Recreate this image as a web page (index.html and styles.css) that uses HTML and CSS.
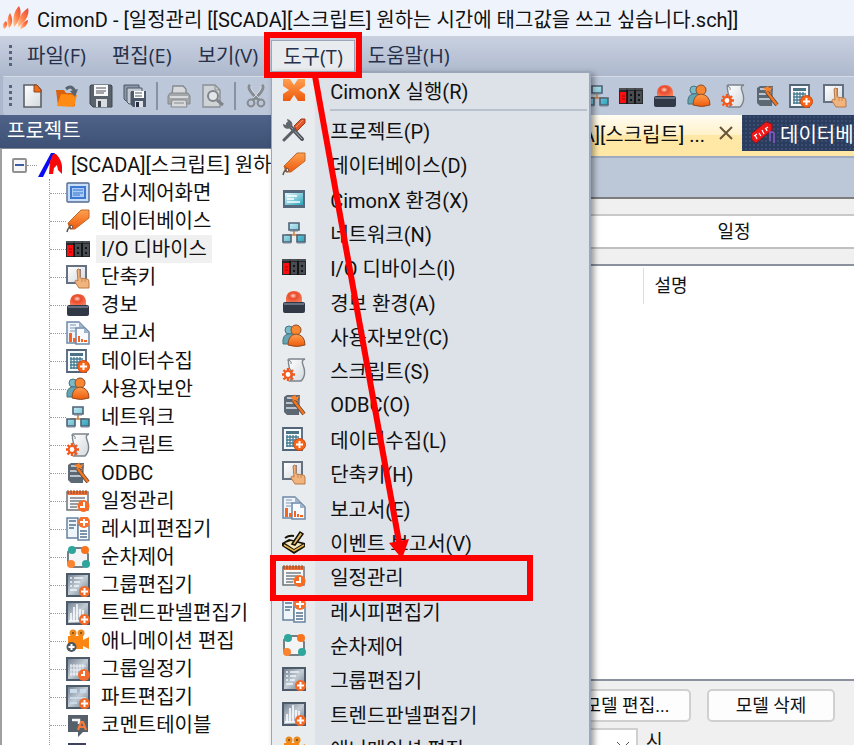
FILE: index.html
```html
<!DOCTYPE html>
<html lang="ko">
<head>
    <meta charset="UTF-8">
    <meta name="viewport" content="width=device-width, initial-scale=1.0">
    <title>CimonD</title>
    <link rel="stylesheet" href="styles.css">
</head>
<body>

<!-- Icon set -->
<svg class="sprite" aria-hidden="true">
    <defs>
        <linearGradient id="orange" x1="0" y1="0" x2="0" y2="1"><stop offset="0" stop-color="#ffa050"/><stop offset="1" stop-color="#ee5a0c"/></linearGradient>
        <linearGradient id="steel" x1="0" y1="0" x2="1" y2="1"><stop offset="0" stop-color="#6d7c8c"/><stop offset="0.5" stop-color="#c3ccd5"/><stop offset="1" stop-color="#657485"/></linearGradient>
        <linearGradient id="paper" x1="0" y1="0" x2="1" y2="1"><stop offset="0" stop-color="#ffffff"/><stop offset="1" stop-color="#d3d9de"/></linearGradient>
        <linearGradient id="glass" x1="0" y1="0" x2="1" y2="1"><stop offset="0" stop-color="#e2f8ff"/><stop offset="1" stop-color="#28a3b8"/></linearGradient>
        <linearGradient id="flame" x1="0" y1="1" x2="1" y2="0"><stop offset="0" stop-color="#ffd0a0"/><stop offset="0.5" stop-color="#ff7d45"/><stop offset="1" stop-color="#e8443c"/></linearGradient>
        <radialGradient id="lamp" cx="0.45" cy="0.4" r="0.6"><stop offset="0" stop-color="#ffd6c8"/><stop offset="0.4" stop-color="#ea4a2a"/><stop offset="1" stop-color="#f47a58"/></radialGradient>
    </defs>
    <symbol id="i-logo" viewBox="0 0 26 26">
        <g fill="url(#flame)"><path d="M1 24c-2-3-1-6 2-8 2 3 1 6-2 8z"/><path d="M6 23c-3-6-1-12 1-15 3 6 3 11-1 15z"/><path d="M11 22c-2-8 0-16 5-21 4 7 0 16-5 21z"/><path d="M15 22c-1-8 4-15 10-19 2 6-3 15-10 19z"/><path d="M17 24c1-4 4-8 8-9 0 4-3 8-8 9z"/></g>
    </symbol>
    <symbol id="i-new" viewBox="0 0 24 24">
        <path d="M3 1h12l5 5v17H3z" fill="url(#paper)" stroke="#5d6165" stroke-width="1.6"/><path d="M13 1h3l4 5v2h-7z" fill="#f26a1b" stroke="#8a4a20"/>
    </symbol>
    <symbol id="i-open" viewBox="0 0 24 24">
        <path d="M1 6h8l2 3h9v13H3z" fill="#d8600f"/><path d="M2 22l4-12 16 1-3 12z" fill="#ff8a14"/><path d="M11 5q6-5 9 3" fill="none" stroke="#596470" stroke-width="3"/><path d="M15 7l8-2-3 8z" fill="#596470"/>
    </symbol>
    <symbol id="i-save" viewBox="0 0 24 24">
        <path d="M2 1h20l1 1v21H4l-3-3V2z" fill="#59616b" stroke="#3f464e"/><path d="M5 1h14v11H5z" fill="#f8f8f8"/><path d="M7 4h10M7 7h10M7 9h8" stroke="#4b5158"/><path d="M7 15h11v8H7z" fill="#d9dde1"/><path d="M9 17h3v6H9z" fill="#3f464e"/>
    </symbol>
    <symbol id="i-saveall" viewBox="0 0 24 24">
        <path d="M1 1h15v4H5v12H3l-2-2z" fill="#8b96a6" stroke="#4c5869"/><path d="M4 4h15v4H8v12H6l-2-2z" fill="#c3cad4" stroke="#4c5869"/><path d="M8 7h15v16H10l-2-2z" fill="#4c5869"/><path d="M11 7h10v7H11z" fill="#fff"/><path d="M12 9h7M12 12h7" stroke="#4c5869"/><path d="M12 17h8v6h-8z" fill="#dde2e8"/><path d="M13 18h3v5h-3z" fill="#26303e"/>
    </symbol>
    <symbol id="i-print" viewBox="0 0 24 24">
        <path d="M5 10l1-8h10l3 3v5" fill="#d8d9da" stroke="#868a8e" stroke-width="1.4"/><path d="M3 9h18l2 3v8H1v-8z" fill="#a4a7aa" stroke="#85898d"/><path d="M3 13h18" stroke="#d9dadb" stroke-width="2"/><path d="M5 16h14l1 7H4z" fill="#d8d9da" stroke="#868a8e"/><path d="M7 19h10" stroke="#868a8e"/>
    </symbol>
    <symbol id="i-preview" viewBox="0 0 24 24">
        <path d="M2 1h12l5 5v17H2z" fill="#cfd3d6" stroke="#8b9095" stroke-width="1.4"/><path d="M14 1v5h5" fill="none" stroke="#8b9095"/><circle cx="12" cy="12" r="5" fill="#e3e6e8" stroke="#7f858a" stroke-width="2"/><path d="M16 16l6 5" stroke="#7f858a" stroke-width="3"/>
    </symbol>
    <symbol id="i-cut" viewBox="0 0 24 24">
        <path d="M5 1q-4 4 9 15M17 1q4 4-9 15" fill="none" stroke="#858b91" stroke-width="3"/><path d="M6 2q-1 4 8 12M16 2q1 4-8 12" fill="none" stroke="#d5d9dc"/><circle cx="6" cy="19" r="3.4" fill="none" stroke="#858b91" stroke-width="2"/><circle cx="16" cy="19" r="3.4" fill="none" stroke="#858b91" stroke-width="2"/>
    </symbol>
    <symbol id="i-run" viewBox="0 0 24 24">
        <path d="M1 1h7l4 6 4-6h7v7l-6 4 6 4v7h-7l-4-6-4 6H1v-7l6-4-6-4z" fill="url(#orange)"/>
    </symbol>
    <symbol id="i-tools" viewBox="0 0 24 24">
        <path d="M6 6l14 15" stroke="#51565c" stroke-width="4" stroke-linecap="round"/><path d="M7 7l13 14" stroke="#a5abb1" stroke-width="1"/><path d="M5 1l1 4-2 2-3-1c0 4 4 6 8 4 3-3 1-8-4-9z" fill="#60666c"/><path d="M2 22l11-11" stroke="#5a6066" stroke-width="3" stroke-linecap="round"/><path d="M12 8l7-7h4v4l-8 8z" fill="#e2572c" stroke="#9c3b1e"/><path d="M14 9l7-7" stroke="#ff9c70"/>
    </symbol>
    <symbol id="i-tag" viewBox="0 0 24 24">
        <path d="M2 14L15 1h8v8L9 20H4z" fill="url(#orange)" stroke="#c06a2c"/><path d="M3 14l3 6" stroke="#a85622"/><circle cx="5" cy="18" r="1.8" fill="#eee" stroke="#714f45"/><path d="M5 18q-3 0-4 5" fill="none" stroke="#5f5148" stroke-width="1.5"/>
    </symbol>
    <symbol id="i-env" viewBox="0 0 24 24">
        <path d="M1 3h22v18H1z" fill="#56687c"/><path d="M3 6h18v12H3z" fill="url(#glass)"/><path d="M5 9h10M5 12h7M5 15h13" stroke="#fff" stroke-width="1.6"/>
    </symbol>
    <symbol id="i-screen" viewBox="0 0 24 24">
        <rect x="1" y="2" width="22" height="19" rx="1" fill="#c9def8" stroke="#546b93" stroke-width="1.4"/><path d="M4 5h16v13H4z" fill="#3f78d0"/><path d="M6 7h12v9H6z" fill="#a9cdf7"/><path d="M7 9h10M7 12h10M7 14h7" stroke="#3974cc"/>
    </symbol>
    <symbol id="i-net" viewBox="0 0 24 24">
        <path d="M12 9v5M5 16v-2h14v2" fill="none" stroke="#c67d3f" stroke-width="1.5"/><g fill="url(#glass)" stroke="#4f6176" stroke-width="1.6"><path d="M7 2h10v7H7zM1 14h8v7H1zM15 14h8v7h-8z"/></g><path d="M8 10h8M1 22h8M15 22h8" stroke="#77879a"/>
    </symbol>
    <symbol id="i-io" viewBox="0 0 24 24">
        <path d="M0 4h24v16H0z" fill="#27292c"/><path d="M1 8h7v11H1z" fill="#fa1010"/><path d="M9 7h6v12H9zM17 7h6v12h-6z" fill="#494c50"/><path d="M8 4v16M16 4v16" stroke="#0e0f10" stroke-width="1.5"/><path d="M0 5h24" stroke="#73777b"/><path d="M3 12h3M3 15h3" stroke="#a50000"/><path d="M11 10h2v2h-2zM11 15h2v2h-2zM19 10h2v2h-2zM19 15h2v2h-2z" fill="#121314"/>
    </symbol>
    <symbol id="i-alarm" viewBox="0 0 24 24">
        <path d="M4 13V8q1-7 8-7t8 7v5z" fill="url(#lamp)"/><rect x="1" y="12" width="22" height="11" rx="2" fill="#313947"/><path d="M2 14h20" stroke="#647082" stroke-width="2"/>
    </symbol>
    <symbol id="i-users" viewBox="0 0 24 24">
        <circle cx="7" cy="6" r="4" fill="#77bcc8" stroke="#49737f"/><path d="M1 20q-1-9 5-10t7 3v7z" fill="#62a5b4" stroke="#49737f"/><circle cx="14" cy="6" r="5" fill="#f98630" stroke="#8d4c25"/><path d="M6 21q0-10 8-11 9 1 9 11-8 3-17 0z" fill="url(#orange)" stroke="#8d4c25"/>
    </symbol>
    <symbol id="i-script" viewBox="0 0 24 24">
        <path d="M7 1h16q-4 1-2 6 4 10-2 16H8q3-3 2-8-5-7-3-14z" fill="url(#paper)" stroke="#7c848c" stroke-width="1.4"/><path d="M5 2q5 0 4 4" fill="none" stroke="#7c848c"/><g stroke="#f4581a" stroke-width="2.4"><path d="M6 10v13M0 16.500h13M1.500 12l9.500 9.500M11 12l-9.500 9.500"/></g><circle cx="6" cy="16.500" r="3.400" fill="#fff" stroke="#f4581a" stroke-width="2"/>
    </symbol>
    <symbol id="i-odbc" viewBox="0 0 24 24">
        <path d="M2 4l3-2h13l-1 20H5l-3-3z" fill="#5c6874"/><path d="M5 5h11M4 10h12M4 15h12" stroke="#bbc4cc" stroke-width="2"/><path d="M11 7l11 14" stroke="#53483f" stroke-width="4"/><path d="M12 8l10 13" stroke="#f57521" stroke-width="2.500"/><path d="M13 1l1 3 4-1-3 3 2 3-4-2-3 2 1-3-3-2 4-1z" fill="#ff8126"/>
    </symbol>
    <symbol id="i-data" viewBox="0 0 24 24">
        <path d="M1 1h19v22H1z" fill="#f6fafc" stroke="#536579" stroke-width="1.800"/><path d="M4 4h13v3H4z" fill="#4a7485"/><path d="M4 10h13M4 13h13M4 16h10M4 19h9M5 8v12M8 8v12M11 8v12M14 8v8" stroke="#467b91" stroke-width="1.300"/><circle cx="17.500" cy="17.500" r="6" fill="#fa6416" stroke="#ca4913"/><path d="M17.500 14v7M14 17.500h7" stroke="#fff" stroke-width="2"/>
    </symbol>
    <symbol id="i-key" viewBox="0 0 24 24">
        <path d="M1 1h19v17H1z" fill="url(#paper)" stroke="#657180" stroke-width="2"/><path d="M11 4h4v8h-4z" fill="#7c83a5"/><path d="M11 5q2-2 3 0v8l7 1q2 0 2 3v6H13l-4-6q0-3 3-1z" fill="#f0b47c" stroke="#b97949"/><path d="M16 14v3M19 14v3" stroke="#c98953"/>
    </symbol>
    <symbol id="i-report" viewBox="0 0 24 24">
        <path d="M1 1h12l5 5v16H1z" fill="#edf4fb" stroke="#6d88a6" stroke-width="1.500"/><path d="M4 4h6M4 7h6M4 10h5" stroke="#8097af"/><path d="M10 7h9l4 4v12H10z" fill="#f7fbff" stroke="#6d88a6" stroke-width="1.500"/><path d="M13 1v5h5zM18 7v5h5z" fill="#9eb2c8"/><path d="M3 12h3v9H3zM7 17h3v4H7zM12 15h2v6h-2zM15 18h2v3h-2zM18 19h3v2h-3z" fill="#f6641f"/>
    </symbol>
    <symbol id="i-event" viewBox="0 0 24 24">
        <path d="M0 13l7-4 16 4v4l-11 7L0 16z" fill="#171309"/><path d="M3 13l6-2 11 3-8 5z" fill="#f7e9bd"/><path d="M2 15l10 6 10-6" fill="none" stroke="#e8b84c" stroke-width="1.500"/><path d="M10 14L18 2l3 2-8 11z" fill="#e8c070" stroke="#171309" stroke-width="1.500"/><path d="M3 8q4-3 9-2" fill="none" stroke="#171309" stroke-width="2"/>
    </symbol>
    <symbol id="i-schedule" viewBox="0 0 24 24">
        <path d="M1 3h21v18H1z" fill="#f7f8f9" stroke="#6c737b" stroke-width="1.500"/><path d="M1 2h21v4H1z" fill="#f17235"/><path d="M2 1v4M5 1v4M8 1v4M11 1v4M14 1v4M17 1v4M20 1v4" stroke="#81422b"/><path d="M4 9h15M4 12h12M4 15h8M4 18h7" stroke="#777f87" stroke-width="1.500"/><circle cx="17.500" cy="17" r="6" fill="#f76b22"/><path d="M18 13v5h-4" fill="none" stroke="#fff" stroke-width="2"/>
    </symbol>
    <symbol id="i-recipe" viewBox="0 0 24 24">
        <path d="M1 1h11v20H1z" fill="#eef5fb" stroke="#6682a0" stroke-width="1.500"/><path d="M12 8h11v15H12z" fill="#fff" stroke="#6682a0" stroke-width="1.500"/><path d="M3 4h7M3 8h7M3 11h5M14 14h7M14 17h7M14 20h7" stroke="#53708f" stroke-width="1.400"/><circle cx="18" cy="5" r="6" fill="#f7702c"/><path d="M18 2v7M14 5h8" stroke="#fff" stroke-width="2"/>
    </symbol>
    <symbol id="i-sequence" viewBox="0 0 24 24">
        <path d="M6 3h12l4 6v9l-5 4H7l-5-4V7z" fill="#f3f4f5" stroke="#777f86" stroke-width="2"/><circle cx="6" cy="5" r="4" fill="#2ea69c"/><circle cx="19" cy="5" r="4" fill="#fa731d"/><circle cx="5" cy="19" r="4" fill="#fa8430"/><circle cx="20" cy="19" r="4" fill="#2ea69c"/>
    </symbol>
    <symbol id="i-group" viewBox="0 0 24 24">
        <path d="M1 1h22v22H1z" fill="url(#steel)" stroke="#4c5a69" stroke-width="2"/><path d="M4 5h2M8 5h9M4 9h2M8 9h6M4 13h2M8 13h5M4 17h7" stroke="#f1f6fa" stroke-width="1.600"/><circle cx="18.500" cy="18.500" r="5.500" fill="#f16a28"/><path d="M18.500 15v7M15 18.500h7" stroke="#fff" stroke-width="2"/>
    </symbol>
    <symbol id="i-trend" viewBox="0 0 24 24">
        <path d="M1 1h22v22H1z" fill="url(#steel)" stroke="#4c5a69" stroke-width="2"/><path d="M5 20v-8M8 20V6M11 20V3M14 17V8M17 14V9M3 20h10" stroke="#fff" stroke-width="1.500"/><circle cx="18.500" cy="18.500" r="5.500" fill="#f16a28"/><path d="M18.500 15v7M15 18.500h7" stroke="#fff" stroke-width="2"/>
    </symbol>
    <symbol id="i-camera" viewBox="0 0 24 24">
        <circle cx="7" cy="4" r="3.500" fill="#e98b20"/><circle cx="15" cy="4" r="3.500" fill="#e98b20"/><circle cx="7" cy="4" r="1" fill="#74440b"/><circle cx="15" cy="4" r="1" fill="#74440b"/><path d="M2 7h15v4l6-3v12l-6-3v3H2z" fill="#fb8612"/><circle cx="5.500" cy="18" r="5" fill="#4d5862"/><path d="M5.500 15v6M2.500 18h6" stroke="#fff" stroke-width="2"/>
    </symbol>
    <symbol id="i-groupcal" viewBox="0 0 24 24">
        <path d="M1 1h22v22H1z" fill="url(#steel)" stroke="#4c5a69" stroke-width="2"/><path d="M4 9h16M4 13h16M4 17h9M5 7v12M8 7v12M11 7v12M14 7v9M17 7v7" stroke="#eef3f6"/><circle cx="18" cy="18" r="6" fill="#f36c2e"/><path d="M18 14v4h-3" fill="none" stroke="#fff" stroke-width="2"/>
    </symbol>
    <symbol id="i-part" viewBox="0 0 24 24">
        <path d="M1 1h22v22H1z" fill="url(#steel)" stroke="#4c5a69" stroke-width="2"/><path d="M4 4h7v4H4zM14 4h6v4h-6zM4 12h16v2H4zM4 17h7v2H4z" fill="#c9dbea"/><circle cx="18.500" cy="18.500" r="5.500" fill="#f16a28"/><path d="M18.500 15v7M15 18.500h7" stroke="#fff" stroke-width="2"/>
    </symbol>
    <symbol id="i-comment" viewBox="0 0 24 24">
        <path d="M2 2h20v17h-5l-5 5v-5H2z" fill="#56606a"/><path d="M6 7h7v4" fill="none" stroke="#f4f6f7" stroke-width="2.500"/><path d="M12 17l3-8h2l3 8M13 14h6" fill="none" stroke="#f5793a" stroke-width="2.200"/>
    </symbol>
    <symbol id="i-dark" viewBox="0 0 24 24"><path d="M2 2h18v20H2z" fill="#3e4162"/></symbol>
    <symbol id="i-root" viewBox="0 0 24 24">
        <path d="M0 24L13 0h4L5 24z" fill="#0a0af5"/><path d="M12 8l3-7h3q5 5 6 12v8l-4-4-1-5-3 3-1 6h-4z" fill="#f80808"/>
    </symbol>
    <symbol id="i-tags" viewBox="0 0 24 24">
        <path d="M0 13L15 1l6 2v6L5 22l-4-3z" fill="#f01818" stroke="#9f0d12"/><path d="M4 14l2 4M8 12l2 3M11 9l2 4M15 7l1 3M3 15l3-2M14 8l3-2" stroke="#fff" stroke-width="1.200"/><path d="M19 10v10M23 12v10M19 12q2-2 4 0" fill="none" stroke="#8a59c8" stroke-width="1.500"/>
    </symbol>
</svg>

<div class="window">
    <header class="titlebar">
        <svg class="logo"><use href="#i-logo"/></svg>
        <span>CimonD - [일정관리 [[SCADA][스크립트] 원하는 시간에 태그값을 쓰고 싶습니다.sch]]</span>
    </header>

    <nav class="menubar">
        <span class="grip"></span>
        <button>파일(F)</button>
        <button>편집(E)</button>
        <button>보기(V)</button>
        <div class="menu-anchor">
            <button class="open">도구(T)</button>
            <ul class="menu">
                <li class="first"><button><svg class="icon"><use href="#i-run"/></svg>CimonX 실행(R)</button></li>
                <li><button><svg class="icon"><use href="#i-tools"/></svg>프로젝트(P)</button></li>
                <li><button><svg class="icon"><use href="#i-tag"/></svg>데이터베이스(D)</button></li>
                <li><button><svg class="icon"><use href="#i-env"/></svg>CimonX 환경(X)</button></li>
                <li><button><svg class="icon"><use href="#i-net"/></svg>네트워크(N)</button></li>
                <li><button><svg class="icon"><use href="#i-io"/></svg>I/O 디바이스(I)</button></li>
                <li><button><svg class="icon"><use href="#i-alarm"/></svg>경보 환경(A)</button></li>
                <li><button><svg class="icon"><use href="#i-users"/></svg>사용자보안(C)</button></li>
                <li><button><svg class="icon"><use href="#i-script"/></svg>스크립트(S)</button></li>
                <li><button><svg class="icon"><use href="#i-odbc"/></svg>ODBC(O)</button></li>
                <li><button><svg class="icon"><use href="#i-data"/></svg>데이터수집(L)</button></li>
                <li><button><svg class="icon"><use href="#i-key"/></svg>단축키(H)</button></li>
                <li><button><svg class="icon"><use href="#i-report"/></svg>보고서(E)</button></li>
                <li><button><svg class="icon"><use href="#i-event"/></svg>이벤트 보고서(V)</button></li>
                <li><button><svg class="icon"><use href="#i-schedule"/></svg>일정관리</button></li>
                <li><button><svg class="icon"><use href="#i-recipe"/></svg>레시피편집기</button></li>
                <li><button><svg class="icon"><use href="#i-sequence"/></svg>순차제어</button></li>
                <li><button><svg class="icon"><use href="#i-group"/></svg>그룹편집기</button></li>
                <li><button><svg class="icon"><use href="#i-trend"/></svg>트렌드판넬편집기</button></li>
                <li><button><svg class="icon"><use href="#i-camera"/></svg>애니메이션 편집</button></li>
            </ul>
        </div>
        <button>도움말(H)</button>
    </nav>

    <div class="toolbar">
        <span class="grip"></span>
        <div class="tools">
            <button aria-label="새로 만들기"><svg class="icon"><use href="#i-new"/></svg></button>
            <button aria-label="열기"><svg class="icon"><use href="#i-open"/></svg></button>
            <button aria-label="저장"><svg class="icon"><use href="#i-save"/></svg></button>
            <button aria-label="모두 저장"><svg class="icon"><use href="#i-saveall"/></svg></button>
            <span class="divider"></span>
            <button aria-label="인쇄"><svg class="icon"><use href="#i-print"/></svg></button>
            <button aria-label="미리 보기"><svg class="icon"><use href="#i-preview"/></svg></button>
            <span class="divider"></span>
            <button aria-label="잘라내기"><svg class="icon"><use href="#i-cut"/></svg></button>
        </div>
        <div class="tools tools-end">
            <button aria-label="네트워크"><svg class="icon"><use href="#i-net"/></svg></button>
            <button aria-label="I/O 디바이스"><svg class="icon"><use href="#i-io"/></svg></button>
            <button aria-label="경보"><svg class="icon"><use href="#i-alarm"/></svg></button>
            <button aria-label="사용자보안"><svg class="icon"><use href="#i-users"/></svg></button>
            <button aria-label="스크립트"><svg class="icon"><use href="#i-script"/></svg></button>
            <button aria-label="ODBC"><svg class="icon"><use href="#i-odbc"/></svg></button>
            <button aria-label="데이터수집"><svg class="icon"><use href="#i-data"/></svg></button>
            <button aria-label="단축키"><svg class="icon"><use href="#i-key"/></svg></button>
        </div>
    </div>

    <main class="workspace">
        <aside class="project">
            <h2>프로젝트</h2>
            <div class="tree">
                <div class="root">
                    <button class="toggle" aria-label="접기"></button>
                    <span class="branch"></span>
                    <svg class="icon"><use href="#i-root"/></svg>
                    <a href="#">[SCADA][스크립트] 원하</a>
                </div>
                <ul>
                    <li><svg class="icon"><use href="#i-screen"/></svg><a href="#">감시제어화면</a></li>
                    <li><svg class="icon"><use href="#i-tag"/></svg><a href="#">데이터베이스</a></li>
                    <li><svg class="icon"><use href="#i-io"/></svg><a href="#" class="selected">I/O 디바이스</a></li>
                    <li><svg class="icon"><use href="#i-key"/></svg><a href="#">단축키</a></li>
                    <li><svg class="icon"><use href="#i-alarm"/></svg><a href="#">경보</a></li>
                    <li><svg class="icon"><use href="#i-report"/></svg><a href="#">보고서</a></li>
                    <li><svg class="icon"><use href="#i-data"/></svg><a href="#">데이터수집</a></li>
                    <li><svg class="icon"><use href="#i-users"/></svg><a href="#">사용자보안</a></li>
                    <li><svg class="icon"><use href="#i-net"/></svg><a href="#">네트워크</a></li>
                    <li><svg class="icon"><use href="#i-script"/></svg><a href="#">스크립트</a></li>
                    <li><svg class="icon"><use href="#i-odbc"/></svg><a href="#">ODBC</a></li>
                    <li><svg class="icon"><use href="#i-schedule"/></svg><a href="#">일정관리</a></li>
                    <li><svg class="icon"><use href="#i-recipe"/></svg><a href="#">레시피편집기</a></li>
                    <li><svg class="icon"><use href="#i-sequence"/></svg><a href="#">순차제어</a></li>
                    <li><svg class="icon"><use href="#i-group"/></svg><a href="#">그룹편집기</a></li>
                    <li><svg class="icon"><use href="#i-trend"/></svg><a href="#">트렌드판넬편집기</a></li>
                    <li><svg class="icon"><use href="#i-camera"/></svg><a href="#">애니메이션 편집</a></li>
                    <li><svg class="icon"><use href="#i-groupcal"/></svg><a href="#">그룹일정기</a></li>
                    <li><svg class="icon"><use href="#i-part"/></svg><a href="#">파트편집기</a></li>
                    <li><svg class="icon"><use href="#i-comment"/></svg><a href="#">코멘트테이블</a></li>
                    <li><svg class="icon"><use href="#i-dark"/></svg></li>
                </ul>
            </div>
        </aside>

        <section class="document">
            <div class="tabs">
                <div class="tab active">
                    <span>[[SCADA][스크립트] ...</span>
                    <button aria-label="닫기"><svg class="close" viewBox="0 0 14 14"><path d="M1 1l12 12M13 1L1 13"/></svg></button>
                </div>
                <div class="tab">
                    <svg class="icon"><use href="#i-tags"/></svg>
                    <span>데이터베</span>
                </div>
            </div>
            <div class="band"></div>
            <div class="views">
                <button aria-label="모델"></button>
                <button>일정</button>
            </div>
            <div class="list">
                <table>
                    <thead>
                        <tr><th class="name"></th><th>설명</th></tr>
                    </thead>
                </table>
            </div>
            <footer class="actions">
                <div class="buttons">
                    <button>모델 편집...</button>
                    <button>모델 삭제</button>
                </div>
                <div class="time">
                    <div class="hour">
                        <select id="hour"><option></option></select>
                        <svg class="chevron" viewBox="0 0 14 8"><path d="M1 1l6 6 6-6"/></svg>
                    </div>
                    <label for="hour">시</label>
                </div>
            </footer>
        </section>
    </main>

    <!-- Guide marks over the window -->
    <div class="mark mark-menu"></div>
    <div class="mark mark-item"></div>
    <svg class="arrow" viewBox="0 0 100 484"><path d="M11 0L95 466" stroke="#f00" stroke-width="6"/><path d="M85 467l20-4-7 20z" fill="#f00"/></svg>
</div>

</body>
</html>
```

FILE: styles.css
```css
* {
    box-sizing: border-box;
}

body {
    margin: 0;
    font-family: Roboto, "Noto Sans CJK KR", sans-serif;
    font-size: 20px;
    color: #111;
}

button {
    font: inherit;
    color: inherit;
    border: none;
    background: none;
    padding: 0;
    margin: 0;
    white-space: nowrap;
}

ul {
    list-style: none;
    margin: 0;
    padding: 0;
}

.sprite {
    position: absolute;
    width: 0;
    height: 0;
}

.icon {
    width: 24px;
    height: 24px;
    flex: none;
    display: block;
}

.window {
    position: relative;
    display: flex;
    flex-direction: column;
    height: 100vh;
    overflow: hidden;
    background: #abb7cc;
}

/* Title */
.titlebar {
    display: flex;
    align-items: center;
    gap: 8px;
    height: 36px;
    flex: none;
    padding-left: 3px;
    background: #eff4fc;
    white-space: nowrap;
}

.logo {
    width: 26px;
    height: 26px;
    flex: none;
}

/* Menu bar */
.menubar {
    display: flex;
    align-items: center;
    height: 40px;
    flex: none;
    padding-left: 9px;
    background: linear-gradient(#c9d1e1, #adb8cd);
    color: #26304a;
    font-family: "Open Sans", "Noto Sans CJK KR", sans-serif;
}

.menubar > button,
.menu-anchor > button {
    height: 32px;
    padding: 0 13px;
    line-height: 32px;
}

.grip {
    width: 3px;
    height: 22px;
    flex: none;
    background: repeating-linear-gradient(#536482 0 3px, transparent 3px 6px);
}

.menubar .grip {
    margin-right: 2px;
}

.menu-anchor {
    position: relative;
    z-index: 2;
}

.menu-anchor > .open {
    padding: 0 11px;
    background: #e9ecee;
    border: 1px solid #9ba7b7;
    border-bottom: none;
}

.menu {
    position: absolute;
    top: 31px;
    left: 0;
    width: 320px;
    padding: 0 2px;
    border: 2px solid #9ba7b9;
    border-left-width: 1px;
    background: linear-gradient(to right, #e9ecee 42px, #dde2e9 44px);
    box-shadow: 3px 3px 6px rgba(0, 0, 0, 0.4);
    color: #111;
    font-family: Roboto, "Noto Sans CJK KR", sans-serif;
}

.menu button {
    display: flex;
    align-items: center;
    gap: 24px;
    width: 100%;
    height: 34px;
    padding-left: 8px;
}

.menu li:nth-child(3n) {
    margin-bottom: 1px;
}

.menu .first::after {
    content: "";
    display: block;
    margin: 2px 0 2px 56px;
    border-top: 2px solid #b9c1cc;
}

/* Toolbar */
.toolbar {
    display: flex;
    align-items: center;
    height: 39px;
    flex: none;
    padding: 0 7px 0 6px;
    border-left: 3px solid #abb7cc;
    border-top: 1px solid #d5dce8;
    border-radius: 5px 0 0 5px;
    background: #bcc7d9;
}

.tools {
    display: flex;
    align-items: center;
    gap: 10px;
    margin-left: 9px;
}

.tools-end {
    margin-left: auto;
}

.divider {
    width: 2px;
    height: 28px;
    margin: 0 -1px;
    background: #8592a8;
}

/* Workspace */
.workspace {
    display: flex;
    flex: 1;
    min-height: 0;
    background: #2b3d5e;
}

.project {
    display: flex;
    flex-direction: column;
    width: 272px;
    flex: none;
}

.project h2 {
    margin: 0;
    height: 33px;
    padding-left: 7px;
    line-height: 32px;
    font-size: 20px;
    font-weight: normal;
    color: #fff;
    background: linear-gradient(#4f6289, #3d5175);
}

.tree {
    flex: 1;
    min-height: 0;
    overflow: hidden;
    padding-top: 2px;
    border-left: 2px solid #a0a0a0;
    border-top: 1px solid #7f8490;
    background: #fff;
}

.tree a {
    padding: 0 5px;
    line-height: 28px;
    color: inherit;
    text-decoration: none;
    white-space: nowrap;
}

.tree a.selected {
    background: #f0f0f0;
}

.root {
    display: flex;
    align-items: center;
    height: 28px;
    padding-left: 10px;
}

.toggle {
    display: flex;
    align-items: center;
    justify-content: center;
    flex: none;
    width: 15px;
    height: 15px;
    border: 2px solid #919191;
    border-radius: 2px;
    background: #f7f7f7;
}

.toggle::before {
    content: "";
    width: 9px;
    height: 2px;
    background: #3c5ca5;
}

.branch {
    flex: none;
    width: 10px;
    border-top: 1px dotted #999;
    margin-right: 1px;
}

.root a {
    padding: 0 0 0 9px;
}

.tree ul {
    margin-left: 47px;
    border-left: 1px dotted #999;
}

.tree li {
    display: flex;
    align-items: center;
    gap: 6px;
    height: 28px;
}

.tree li::before {
    content: "";
    width: 16px;
    margin-right: -6px;
    border-top: 1px dotted #999;
}

/* Document area */
.document {
    display: flex;
    flex-direction: column;
    flex: 1;
    min-width: 0;
    overflow: hidden;
    font-size: 18px;
}

.tabs {
    display: flex;
    height: 41px;
    flex: none;
    border-bottom: 5px solid #ffe8a6;
    background: #2b3d5e radial-gradient(#3a4d70 1px, transparent 1px) 0 0 / 4px 4px;
    font-size: 20px;
}

.tab {
    display: flex;
    align-items: center;
    gap: 5px;
    padding-left: 9px;
    color: #fff;
    white-space: nowrap;
}

.tab.active {
    flex: 0 0 470px;
    justify-content: flex-end;
    gap: 14px;
    padding-right: 9px;
    color: #111;
    background: linear-gradient(#fffcf2, #fff1c9 55%, #ffe8a6 56%);
}

.close {
    display: block;
    width: 14px;
    height: 14px;
    fill: none;
    stroke: #65563b;
    stroke-width: 2;
}

.band {
    height: 43px;
    flex: none;
    border-top: 2px solid #9eabc0;
    border-bottom: 2px solid #7d7d7d;
    background: #bcc7d8;
}

.views {
    display: grid;
    grid-template-columns: 342px 1fr;
    padding: 15px 0;
    background: #f0f0f0;
}

.views button {
    height: 35px;
    padding-bottom: 4px;
    border-top: 2px solid #c9c9c9;
    border-bottom: 2px solid #c0c0c0;
    background: #fff;
}

.list {
    flex: 1;
    border-top: 2px solid #8a909c;
    border-bottom: 2px solid #8a909c;
    background: #fff;
}

.list table {
    width: 100%;
    border-collapse: collapse;
    table-layout: fixed;
    margin-top: 2px;
}

.list th {
    height: 36px;
    padding: 0 0 4px 11px;
    font-weight: normal;
    text-align: left;
}

.list .name {
    width: 371px;
    border-right: 1px solid #ddd;
}

.actions {
    display: flex;
    flex: 0 0 64px;
    flex-direction: column;
    gap: 6px;
    overflow: hidden;
    padding-top: 8px;
    background: #f0f0f0;
}

.buttons {
    display: flex;
    flex: none;
    justify-content: flex-end;
    gap: 16px;
    padding-right: 19px;
}

.buttons button {
    width: 128px;
    height: 33px;
    padding-bottom: 4px;
    border: 2px solid #d0d0d0;
    border-radius: 5px;
    background: #fdfdfd;
}

.time {
    display: flex;
    flex: none;
    gap: 8px;
    padding-left: 246px;
    line-height: 26px;
}

.hour {
    display: grid;
    align-items: center;
}

.hour select,
.chevron {
    grid-area: 1 / 1;
}

.hour select {
    width: 120px;
    height: 34px;
    border: 2px solid #d0d0d0;
    background: #fff;
    font: inherit;
    appearance: none;
}

.chevron {
    justify-self: end;
    width: 14px;
    height: 8px;
    margin-right: 8px;
    fill: none;
    stroke: #555;
    stroke-width: 1;
}

/* Guide marks */
.mark {
    position: absolute;
    z-index: 3;
    border: 6px solid #f00;
}

.mark-menu {
    left: 264px;
    top: 32px;
    width: 98px;
    height: 46px;
}

.mark-item {
    left: 270px;
    top: 555px;
    width: 263px;
    height: 46px;
}

.arrow {
    position: absolute;
    z-index: 3;
    left: 304px;
    top: 76px;
    width: 100px;
    height: 484px;
    overflow: visible;
}
```
